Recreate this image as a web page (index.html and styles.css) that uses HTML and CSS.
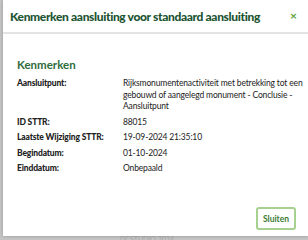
FILE: index.html
```html
<!DOCTYPE html>
<html lang="nl">
<head>
  <meta charset="UTF-8" />
  <meta name="viewport" content="width=device-width, initial-scale=1.0"/>
  <title>Kenmerken aansluiting</title>
  <link rel="stylesheet" href="styles.css">
</head>
<body>
  <div class="backdrop-text">DCSTUDIO 2024</div>
  <div class="modal">
    <div class="modal-header">
      <h1>Kenmerken aansluiting voor standaard aansluiting</h1>
      <span class="close">&#215;</span>
    </div>
    <div class="modal-body">
      <h2>Kenmerken</h2>
      <dl class="props">
        <dt>Aansluitpunt:</dt>
        <dd>Rijksmonumentenactiviteit met betrekking tot een gebouwd of aangelegd monument - Conclusie - Aansluitpunt</dd>
        <dt>ID STTR:</dt>
        <dd>88015</dd>
        <dt>Laatste Wijziging STTR:</dt>
        <dd>19-09-2024 21:35:10</dd>
        <dt>Begindatum:</dt>
        <dd>01-10-2024</dd>
        <dt>Einddatum:</dt>
        <dd>Onbepaald</dd>
      </dl>
    </div>
    <div class="modal-footer">
      <button>Sluiten</button>
    </div>
  </div>
</body>
</html>
```

FILE: styles.css
```css
body {
  margin: 0;
  height: 240px;
  overflow: hidden;
  background-color: #c4c4c4;
  font-family: Lato, sans-serif;
  position: relative;
}
.backdrop-text {
  position: absolute;
  left: 120px;
  top: 235px;
  font-size: 7px;
  line-height: 8px;
  color: #aaa;
}
.modal {
  position: relative;
  margin-left: 3px;
  height: 236px;
  background: #fff;
  box-shadow: 0 0 3px rgba(0, 0, 0, 0.25);
  display: flex;
  flex-direction: column;
}
.modal-header {
  height: 32px;
  border-bottom: 2px solid #e4e4e4;
  display: flex;
  align-items: center;
  justify-content: space-between;
  padding: 0 11px 0 7px;
}
.modal-header h1 {
  margin: 0;
  font-size: 12px;
  font-weight: 900;
  letter-spacing: -0.35px;
  color: #215431;
  white-space: nowrap;
}
.close {
  color: #5aa33a;
  font-size: 12px;
  font-weight: 700;
  line-height: 1;
}
.modal-body {
  padding: 24px 5px 0 14px;
  flex: 1;
}
.modal-body h2 {
  margin: 0 0 7px 0;
  font-size: 11.5px;
  font-weight: 700;
  color: #2f6b3c;
}
.props {
  display: grid;
  grid-template-columns: 106px 1fr;
  row-gap: 4px;
  margin: 0;
  font-size: 8.5px;
  letter-spacing: -0.15px;
  line-height: 11.5px;
  color: #222;
}
.props dt {
  font-weight: 900;
}
.props dd {
  margin: 0;
}
.modal-footer {
  display: flex;
  justify-content: flex-end;
  padding: 0 12px 6px 0;
}
.modal-footer button {
  font-family: Lato, sans-serif;
  font-size: 8.5px;
  font-weight: 700;
  color: #3d7a35;
  background: #fff;
  border: 2px solid #a6d18f;
  border-radius: 3px;
  width: 40px;
  height: 23px;
  padding: 0;
}
```
